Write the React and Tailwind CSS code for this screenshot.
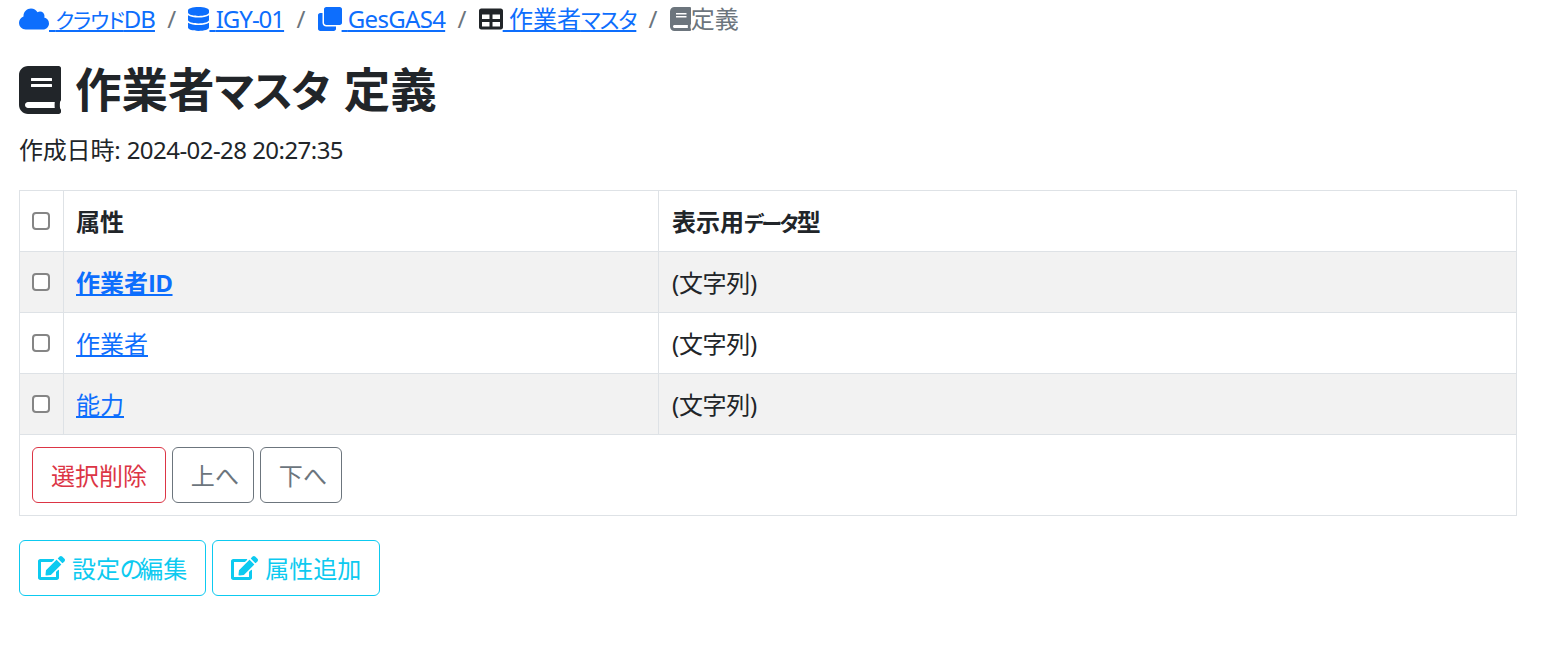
import React from 'react';
import { FaCloud, FaDatabase, FaClone, FaTable, FaBook, FaEdit } from 'react-icons/fa';

const Check = () => (
  <input
    type="checkbox"
    className="block appearance-none w-[18px] h-[18px] bg-white border-2 border-[#858585] rounded-[4px]"
  />
);

const Slash = () => <span className="w-[33.5px] text-center text-[#6c757d]">/</span>;

const linkClass = 'text-[#0d6efd] underline';

const rows = [
  { name: <>作業者<span className="[font-family:'Open_Sans',sans-serif] tracking-[-0.6px]">ID</span></>, key: 'id', bold: true, striped: true },
  { name: '作業者', key: 'worker', bold: false, striped: false },
  { name: '能力', key: 'skill', bold: false, striped: true },
];

const App = () => {
  return (
    <div className="min-h-[659px] bg-white pl-[19px] pr-[25px] text-[24px] leading-[36px] text-[#212529] [font-family:'Noto_Sans','Noto_Sans_CJK_JP',sans-serif] [font-feature-settings:'palt']">
      <nav className="flex items-center h-[36px] mt-[1px] whitespace-pre">
        <a href="#" className={linkClass}>
          <FaCloud className="inline-block w-[30px] h-[24px] align-[-3px]" /> <span className="text-[21px] tracking-[-1px]">クラウド</span><span className="tracking-[-1px]">DB</span>
        </a>
        <Slash />
        <a href="#" className={linkClass}>
          <FaDatabase className="inline-block w-[21px] h-[24px] align-[-3px]" /> <span className="tracking-[-1px]">IGY-01</span>
        </a>
        <Slash />
        <a href="#" className={linkClass}>
          <FaClone className="inline-block w-[24px] h-[24px] align-[-3px]" /> <span className="tracking-[-0.7px]">GesGAS4</span>
        </a>
        <Slash />
        <a href="#" className={linkClass}>
          <FaTable className="inline-block w-[24px] h-[24px] align-[-3px] text-[#212529]" /> 作業者<span className="text-[22px] tracking-[-1.1px]">マスタ</span>
        </a>
        <Slash />
        <span className="text-[#6c757d]">
          <FaBook className="inline-block w-[21px] h-[24px] align-[-3px]" />定義
        </span>
      </nav>

      <h1 className="mt-[25px] flex items-center gap-[14px] text-[46.5px] leading-[55px] font-semibold">
        <FaBook className="w-[42px] h-[48px] shrink-0" />
        <span>作業者<span className="text-[43px] tracking-[-1.8px]">マスタ</span> <span className="ml-[3px]">定義</span></span>
      </h1>

      <p className="mt-[14px] h-[36px]"><span className="tracking-[-0.2px]">作成日時:</span> <span className="tracking-[-0.55px]">2024-02-28 20:27:35</span></p>

      <table className="mt-[22px] w-[1498px] table-fixed border-collapse border border-[#dee2e6]">
        <colgroup>
          <col className="w-[44px]" />
          <col className="w-[595px]" />
          <col />
        </colgroup>
        <thead>
          <tr className="h-[61px]">
            <th className="border border-[#dee2e6] px-[12px]"><Check /></th>
            <th className="border border-[#dee2e6] px-[12px] pt-[2px] text-left font-bold">属性</th>
            <th className="border border-[#dee2e6] px-[13px] pt-[2px] text-left font-bold">
              表示用<span className="text-[21px] tracking-[-2.2px]">データ</span>型
            </th>
          </tr>
        </thead>
        <tbody>
          {rows.map((row) => (
            <tr key={row.key} className={`h-[61px] ${row.striped ? 'bg-[#f2f2f2]' : 'bg-white'}`}>
              <td className="border border-[#dee2e6] px-[12px]"><Check /></td>
              <td className="border border-[#dee2e6] px-[12px] pt-[2px]">
                <a href="#" className={`${linkClass} ${row.bold ? 'font-bold' : ''}`}>{row.name}</a>
              </td>
              <td className="border border-[#dee2e6] px-[13px] pt-[2px] tracking-[-0.3px]">(文字列)</td>
            </tr>
          ))}
          <tr>
            <td colSpan={3} className="border border-[#dee2e6] p-[12px]">
              <div className="flex gap-[6px]">
                <button className="h-[56px] px-[18px] pt-[2px] border border-[#dc3545] rounded-[6px] text-[#dc3545]">選択削除</button>
                <button className="h-[56px] w-[82px] pt-[2px] border border-[#6c757d] rounded-[6px] text-[#6c757d]">上<span className="tracking-[-4px]">へ</span></button>
                <button className="h-[56px] w-[82px] pt-[2px] border border-[#6c757d] rounded-[6px] text-[#6c757d]">下<span className="tracking-[-4px]">へ</span></button>
              </div>
            </td>
          </tr>
        </tbody>
      </table>

      <div className="mt-[24px] flex gap-[6px]">
        <button className="flex items-center gap-[7px] h-[56px] px-[18px] border border-[#0dcaf0] rounded-[6px] text-[#0dcaf0]">
          <FaEdit className="w-[27px] h-[24px]" /><span className="pt-[2px]">設定<span className="tracking-[-4px]">の</span>編集</span>
        </button>
        <button className="flex items-center gap-[7px] h-[56px] px-[18px] border border-[#0dcaf0] rounded-[6px] text-[#0dcaf0]">
          <FaEdit className="w-[27px] h-[24px]" /><span className="pt-[2px]">属性追加</span>
        </button>
      </div>
    </div>
  );
};

export default App;
